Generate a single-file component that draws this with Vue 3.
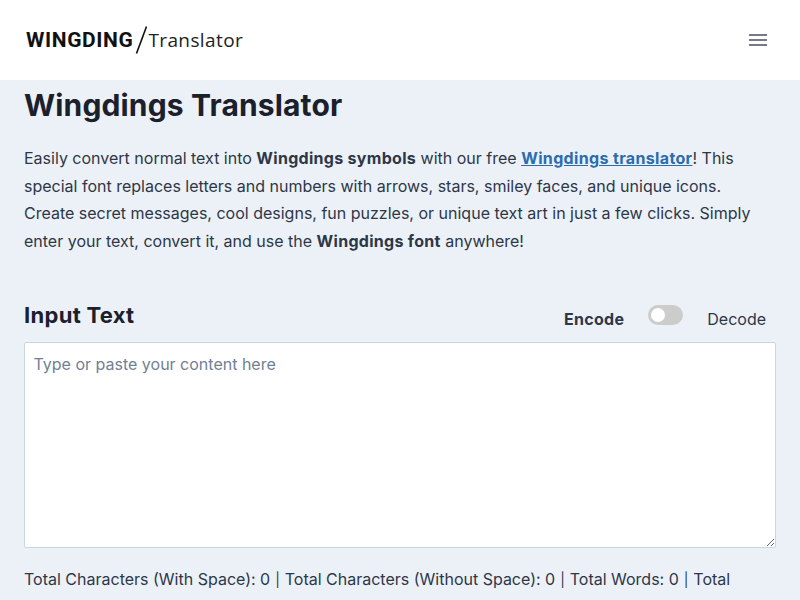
<template>
  <div class="page">
    <header class="site-header">
      <a class="logo" href="#">
        <span class="logo-main">WINGDING</span>
        <svg class="logo-slash" width="12" height="28" viewBox="0 0 12 28">
          <path d="M11.5 0.5 L1.5 27.5" stroke="#111" stroke-width="1.6" fill="none" />
        </svg>
        <span class="logo-sub">Translator</span>
      </a>
      <button class="menu-btn" aria-label="Menu">
        <span></span><span></span><span></span>
      </button>
    </header>

    <main class="content">
      <h1>Wingdings Translator</h1>
      <p class="intro">
        Easily convert normal text into <strong>Wingdings symbols</strong> with our free
        <a href="#">Wingdings translator</a>! This special font replaces letters and numbers with
        arrows, stars, smiley faces, and unique icons. Create secret messages, cool designs, fun
        puzzles, or unique text art in just a few clicks. Simply enter your text, convert it, and
        use the <strong>Wingdings font</strong> anywhere!
      </p>

      <div class="input-head">
        <h2>Input Text</h2>
        <div class="mode">
          <span class="mode-label active">Encode</span>
          <span class="switch" @click="decode = !decode" :class="{ on: decode }"><i></i></span>
          <span class="mode-label">Decode</span>
        </div>
      </div>

      <textarea v-model="text" placeholder="Type or paste your content here"></textarea>

      <p class="stats">
        Total Characters (With Space): {{ text.length }} <span class="sep">|</span> Total Characters (Without Space):
        {{ text.replace(/\s/g, '').length }} <span class="sep">|</span> Total Words: {{ words }} <span class="sep">|</span> Total Sentences: 0
      </p>
    </main>
  </div>
</template>

<script setup>
import { ref, computed } from 'vue'

const text = ref('')
const decode = ref(false)

const words = computed(() => text.value.trim().split(/\s+/).filter(Boolean).length)
</script>

<style>
html, body {
  margin: 0;
  background: #ecf1f7;
}
body {
  overflow-x: hidden;
}
</style>

<style scoped>
.page {
  font-family: Inter, "Liberation Sans", sans-serif;
  color: #2d3748;
  background: #ecf1f7;
}

.site-header {
  height: 80px;
  background: #fff;
  display: flex;
  align-items: center;
  justify-content: space-between;
  padding: 0 33px 0 26px;
}

.logo {
  display: flex;
  align-items: center;
  text-decoration: none;
  color: #111;
}

.logo-main {
  font-family: Roboto, sans-serif;
  font-weight: 700;
  font-size: 21px;
  letter-spacing: 0.6px;
}

.logo-slash {
  margin: 0 1px 0 2px;
}

.logo-sub {
  font-family: "Open Sans", sans-serif;
  font-size: 19px;
  letter-spacing: 0.4px;
  color: #222;
}

.menu-btn {
  width: 18px;
  padding: 0;
  background: none;
  border: 0;
  display: flex;
  flex-direction: column;
  gap: 3px;
}

.menu-btn span {
  display: block;
  height: 2px;
  background: #767a88;
}

.content {
  padding: 0 24px;
}

h1 {
  margin: 0;
  padding-top: 5px;
  font-size: 30px;
  line-height: 40px;
  font-weight: 700;
  letter-spacing: 0.15px;
  color: #1a202c;
}

.intro {
  margin: 20px 2px 0 0;
  font-size: 16px;
  line-height: 27.5px;
}

.intro strong {
  font-weight: 700;
  letter-spacing: 0.3px;
}

.intro a {
  color: #2b6cb0;
  font-weight: 700;
  letter-spacing: 0.35px;
  text-decoration: underline;
}

.input-head {
  margin-top: 44px;
  display: flex;
  justify-content: space-between;
  align-items: center;
}

h2 {
  margin: 0;
  font-size: 22px;
  line-height: 32px;
  font-weight: 700;
  letter-spacing: 0.3px;
  color: #1a202c;
}

.mode {
  display: flex;
  align-items: center;
  padding-right: 10px;
}

.mode-label {
  font-size: 16px;
  line-height: 24px;
  margin-top: 8px;
}

.mode-label.active {
  font-weight: 700;
  letter-spacing: 0.3px;
}

.switch {
  width: 35px;
  height: 20px;
  margin: 0 24px;
  border-radius: 10px;
  background: #ccc;
  position: relative;
  margin-top: -1px;
}

.switch i {
  position: absolute;
  left: 3px;
  top: 3px;
  width: 14px;
  height: 14px;
  border-radius: 50%;
  background: #fff;
}

textarea {
  display: block;
  box-sizing: border-box;
  width: 100%;
  height: 206px;
  margin-top: 11px;
  padding: 8px 8px 8px 8.5px;
  border: 1px solid #cbd5e0;
  border-radius: 2px;
  background: #fff;
  font-family: inherit;
  font-size: 16px;
  line-height: 27px;
  color: #2d3748;
  outline: none;
}

textarea::placeholder {
  color: #718096;
  opacity: 1;
}

.stats {
  margin: 18px 0 0;
  font-size: 16px;
  line-height: 27.5px;
}

.sep {
  display: inline-block;
  width: 5.5px;
  font-size: 14px;
  text-align: center;
}
</style>
